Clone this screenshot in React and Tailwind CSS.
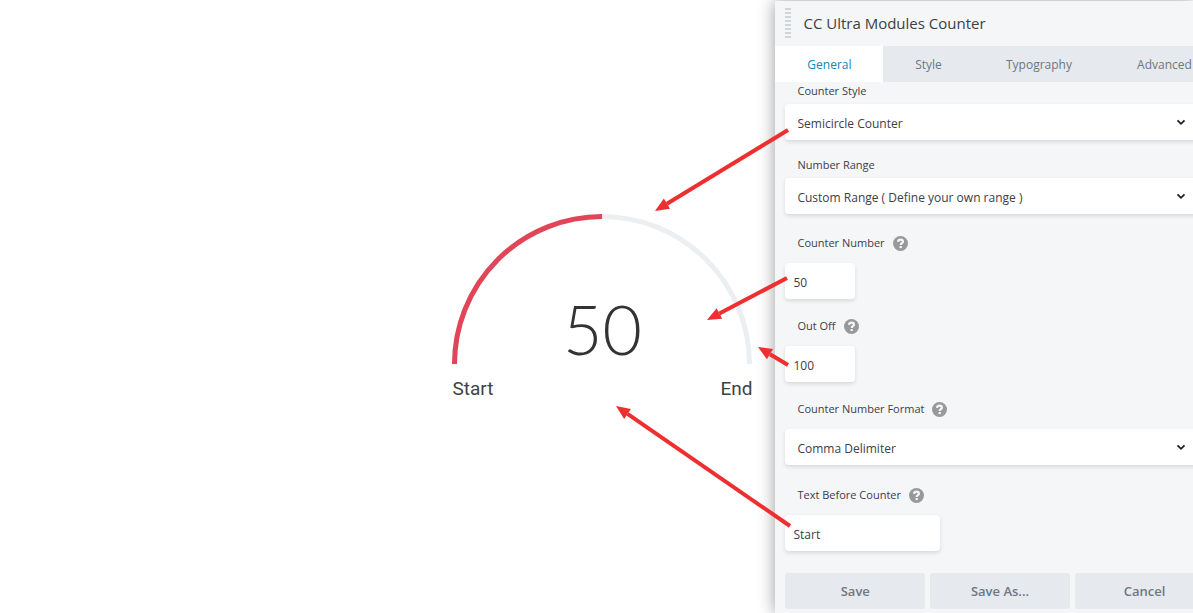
import React, { useState } from 'react';

const tabs = [
  { name: 'General', width: 'w-[108px]' },
  { name: 'Style', width: 'w-[90px]' },
  { name: 'Typography', width: 'w-[131px]' },
  { name: 'Advanced', width: 'w-[120px]' }
];

const arrows = [
  { from: [13, 130], to: [-120, 211] },
  { from: [12, 278], to: [-68, 320] },
  { from: [13, 365], to: [-17, 347] },
  { from: [15, 526], to: [-159, 406] }
];

function Arrow({ from, to }) {
  const angle = Math.atan2(to[1] - from[1], to[0] - from[0]);
  const baseX = to[0] - Math.cos(angle) * 14;
  const baseY = to[1] - Math.sin(angle) * 14;
  const dx = Math.sin(angle) * 6;
  const dy = Math.cos(angle) * 6;

  return (
    <g>
      <line x1={from[0]} y1={from[1]} x2={baseX} y2={baseY} stroke="#ed2f2f" strokeWidth="4" />
      <polygon
        points={`${to[0]},${to[1]} ${baseX + dx},${baseY - dy} ${baseX - dx},${baseY + dy}`}
        fill="#ed2f2f"
      />
    </g>
  );
}

function HelpIcon() {
  return (
    <svg viewBox="0 0 16 16" className="h-[15px] w-[15px]" aria-hidden="true">
      <circle cx="8" cy="8" r="8" fill="#999999" />
      <path
        d="M5.4 6.3C5.5 4.7 6.6 3.9 8.1 3.9C9.6 3.9 10.6 4.8 10.6 6C10.6 7.6 8.2 7.7 8.2 9.5"
        fill="none"
        stroke="#f5f6f8"
        strokeWidth="2.3"
      />
      <rect x="7" y="10.7" width="2.4" height="2.2" fill="#f5f6f8" />
    </svg>
  );
}

function FieldLabel({ id, help, children }) {
  return (
    <div className={help ? 'mb-[11px] flex h-[18px] items-center gap-2 px-3' : 'mb-1 flex h-[18px] items-center px-3'}>
      <label htmlFor={id} className="text-[11px] leading-[18px] text-[#3c4045]">
        {children}
      </label>
      {help && <HelpIcon />}
    </div>
  );
}

function SelectField({ id, label, option, help }) {
  return (
    <div>
      <FieldLabel id={id} help={help}>{label}</FieldLabel>
      <div className="relative">
        <select
          id={id}
          className="block h-9 w-full appearance-none rounded-[4px] bg-white px-3 pt-[3px] text-[12px] text-[#3c4045] shadow-[0_2px_4px_rgba(0,0,0,0.12)] outline-none"
        >
          <option>{option}</option>
        </select>
        <svg viewBox="0 0 10 7" className="pointer-events-none absolute top-[15px] right-[28px] h-[7px] w-[10px]">
          <path d="M1.5 1.3L5 4.8L8.5 1.3" fill="none" stroke="#1d1f21" strokeWidth="1.8" />
        </svg>
      </div>
    </div>
  );
}

function TextField({ id, label, value, onChange, width }) {
  return (
    <div>
      <FieldLabel id={id} help>{label}</FieldLabel>
      <input
        id={id}
        type="text"
        value={value}
        onChange={(e) => onChange(e.target.value)}
        className={`block h-9 rounded-[4px] bg-white px-2 pt-[3px] text-[12px] text-[#3c4045] shadow-[0_2px_4px_rgba(0,0,0,0.12)] outline-none ${width}`}
      />
    </div>
  );
}

function SemicircleCounter({ number, total, before, after }) {
  const length = Math.PI * 147.5;
  const filled = length * Math.min(1, (Number(number) || 0) / (Number(total) || 1));

  return (
    <div className="w-[300px] font-['Roboto',sans-serif]">
      <div className="relative">
        <svg viewBox="0 0 300 150" className="block w-full">
          <path d="M2.5 150A147.5 147.5 0 0 1 297.5 150" fill="none" stroke="#ebeff2" strokeWidth="5" />
          <path
            d="M2.5 150A147.5 147.5 0 0 1 297.5 150"
            fill="none"
            stroke="#e04657"
            strokeWidth="5"
            strokeDasharray={`${filled} 1000`}
          />
        </svg>
        <div className="absolute inset-x-0 bottom-0 text-center font-['Lato',sans-serif] text-[68px] leading-[70px] font-light text-[#333333]">
          {number}
        </div>
      </div>
      <div className="mt-[13px] flex justify-between text-[19px] leading-6 text-[#3d4247]">
        <span>{before}</span>
        <span>{after}</span>
      </div>
    </div>
  );
}

function App() {
  const [activeTab, setActiveTab] = useState('General');
  const [number, setNumber] = useState('50');
  const [total, setTotal] = useState('100');
  const [before, setBefore] = useState('Start');

  return (
    <div className="flex min-h-screen overflow-hidden bg-white font-['Open_Sans','Noto_Sans',sans-serif]">
      <main className="flex flex-1 justify-end pt-[214px] pr-[23px]">
        <SemicircleCounter number={number} total={total} before={before} after="End" />
      </main>

      <aside className="relative mt-px w-[35%] bg-[#f5f6f8] shadow-[0_0_16px_rgba(0,0,0,0.4)]">
        <div className="overflow-hidden">
          <div className="w-[449px]">
            <header className="flex h-[45px] items-center gap-3 px-[10px] pb-px">
              <div className="flex flex-col gap-[2px]">
                {[0, 1, 2, 3, 4, 5, 6, 7].map((i) => (
                  <span key={i} className="h-[2px] w-[6px] bg-[#cdd4da]" />
                ))}
              </div>
              <h1 className="text-[15px] leading-5 text-[#3c4045]">CC Ultra Modules Counter</h1>
            </header>

            <nav className="flex h-9 bg-[#e6e9ed]">
              {tabs.map((tab) => (
                <button
                  key={tab.name}
                  type="button"
                  onClick={() => setActiveTab(tab.name)}
                  className={`${tab.width} pt-px text-[12px] ${activeTab === tab.name ? 'bg-white text-[#0e88b5]' : 'text-[#6d7882]'}`}
                >
                  {tab.name}
                </button>
              ))}
            </nav>

            <form onSubmit={(e) => e.preventDefault()} className="px-[10px] pb-1">
              <div className="flex flex-col gap-4">
                <SelectField id="counter-style" label="Counter Style" option="Semicircle Counter" />
                <SelectField id="number-range" label="Number Range" option="Custom Range ( Define your own range )" />
              </div>
              <div className="mt-5 flex flex-col gap-[18px]">
                <TextField id="counter-number" label="Counter Number" value={number} onChange={setNumber} width="w-[70px]" />
                <TextField id="out-off" label="Out Off" value={total} onChange={setTotal} width="w-[70px]" />
                <SelectField id="number-format" label="Counter Number Format" option="Comma Delimiter" help />
              </div>
              <div className="mt-[21px]">
                <TextField id="text-before" label="Text Before Counter" value={before} onChange={setBefore} width="w-[155px]" />
              </div>
              <div className="mt-[22px] grid grid-cols-3 gap-[5px]">
                {['Save', 'Save As...', 'Cancel'].map((name) => (
                  <button key={name} type="button" className="h-9 rounded-[3px] bg-[#e6e9ed] pt-px text-[13px] font-semibold text-[#6d7882]">
                    {name}
                  </button>
                ))}
              </div>
            </form>
          </div>
        </div>

        {/* Pointers from each setting to the part of the counter it changes */}
        <svg className="pointer-events-none absolute -top-px left-0 h-[613px] w-[10px] overflow-visible">
          {arrows.map((arrow) => (
            <Arrow key={arrow.to[1]} from={arrow.from} to={arrow.to} />
          ))}
        </svg>
      </aside>
    </div>
  );
}

export default App;
